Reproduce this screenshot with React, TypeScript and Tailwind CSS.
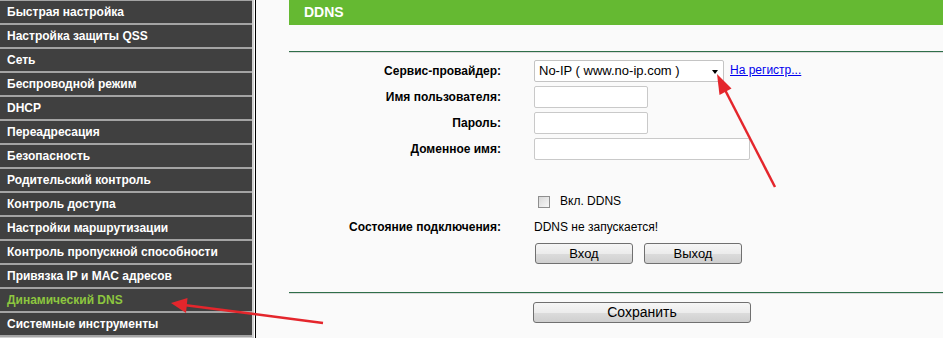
import React from 'react';

const menu = [
  'Быстрая настройка',
  'Настройка защиты QSS',
  'Сеть',
  'Беспроводной режим',
  'DHCP',
  'Переадресация',
  'Безопасность',
  'Родительский контроль',
  'Контроль доступа',
  'Настройки маршрутизации',
  'Контроль пропускной способности',
  'Привязка IP и MAC адресов',
  'Динамический DNS',
  'Системные инструменты',
];

const btn =
  'h-[21px] border border-[#707070] rounded-[3px] text-[13px] leading-[19px] text-black text-center bg-[linear-gradient(#f6f6f6_0%,#ececec_50%,#dcdcdc_51%,#cfcfcf_100%)]';

function Row({ label, children }: { label?: string; children?: React.ReactNode }) {
  return (
    <div className="grid grid-cols-[212px_1fr] gap-x-[33px] h-[26px] items-center">
      <div className="text-right text-[12px] font-bold text-black">{label}</div>
      <div className="flex items-center">{children}</div>
    </div>
  );
}

function Input({ w }: { w: string }) {
  return <div className={`${w} h-[22px] bg-white border border-[#c9c9c9] rounded-[2px]`} />;
}

export default function App() {
  return (
    <div
      className="relative w-full h-[338px] overflow-hidden flex bg-[#fafafa]"
      style={{ fontFamily: '"Liberation Sans", Arial, sans-serif' }}
    >
      {/* Sidebar */}
      <div className="w-[255px] shrink-0 bg-[#d0d0d0] border-r border-white">
        <div className="w-[252px] bg-[#a4a4a4] pt-px">
          {menu.map((m) => (
            <div
              key={m}
              className={`h-[24px] bg-[#404040] border-b-2 border-[#a4a4a4] pl-[7px] text-[12px] font-bold leading-[22px] ${
                m === 'Динамический DNS' ? 'text-[#8dc63f]' : 'text-white'
              }`}
            >
              {m}
            </div>
          ))}
        </div>
      </div>

      {/* Content */}
      <div className="flex-1 border-l border-black pl-[33px]">
        <div className="h-[25px] bg-[#65b932] pl-[15px] text-[14px] font-bold text-white leading-[24px]">
          DDNS
        </div>
        <div className="mt-[26px] h-px bg-[#2f6f4a]" />
        <div className="h-px bg-[#dadada]" />

        <div className="mt-[5px]">
          <Row label="Сервис-провайдер:">
            <div className="relative w-[190px] h-[22px] bg-white border border-[#c4c4c4] rounded-[2px] pl-[4px] text-[13px] leading-[20px] text-black">
              No-IP ( www.no-ip.com )
              <span className="absolute right-[5px] top-[9px] w-0 h-0 border-l-[3.5px] border-r-[3.5px] border-t-[4px] border-l-transparent border-r-transparent border-t-black" />
            </div>
            <a className="ml-[6px] text-[12px] text-[#0000ee] underline mb-[3px]">На регистр...</a>
          </Row>
          <Row label="Имя пользователя:">
            <Input w="w-[114px]" />
          </Row>
          <Row label="Пароль:">
            <Input w="w-[114px]" />
          </Row>
          <Row label="Доменное имя:">
            <Input w="w-[216px]" />
          </Row>
          <div className="h-[26px]" />
          <Row>
            <span className="ml-[4px] mt-[2px] w-[12px] h-[12px] border border-[#8e8e8e] bg-[linear-gradient(135deg,#d8d8d8,#f7f7f7)]" />
            <span className="ml-[10px] text-[12px] text-black">Вкл. DDNS</span>
          </Row>
          <Row label="Состояние подключения:">
            <span className="text-[12px] text-black">DDNS не запускается!</span>
          </Row>
          <Row>
            <div className={`${btn} ml-px w-[98px]`}>Вход</div>
            <div className={`${btn} ml-[11px] w-[98px]`}>Выход</div>
          </Row>
        </div>

        <div className="mt-[26px] h-px bg-[#2f6f4a]" />
        <div className="h-px bg-[#dadada]" />
        <div className="mt-[8px] pl-[244px]">
          <div className={`${btn} w-[218px] text-[14px]`}>Сохранить</div>
        </div>
      </div>

      {/* Annotation arrows */}
      <svg className="absolute inset-0 pointer-events-none" width="943" height="338">
        <line x1="775" y1="187" x2="723" y2="86" stroke="#e4262c" strokeWidth="2.5" />
        <polygon points="717,74 731.5,88.6 719.5,95" fill="#e4262c" />
        <line x1="323" y1="323" x2="184" y2="305" stroke="#e4262c" strokeWidth="2.5" />
        <polygon points="171,303 187.5,298 186,313" fill="#e4262c" />
      </svg>
    </div>
  );
}
